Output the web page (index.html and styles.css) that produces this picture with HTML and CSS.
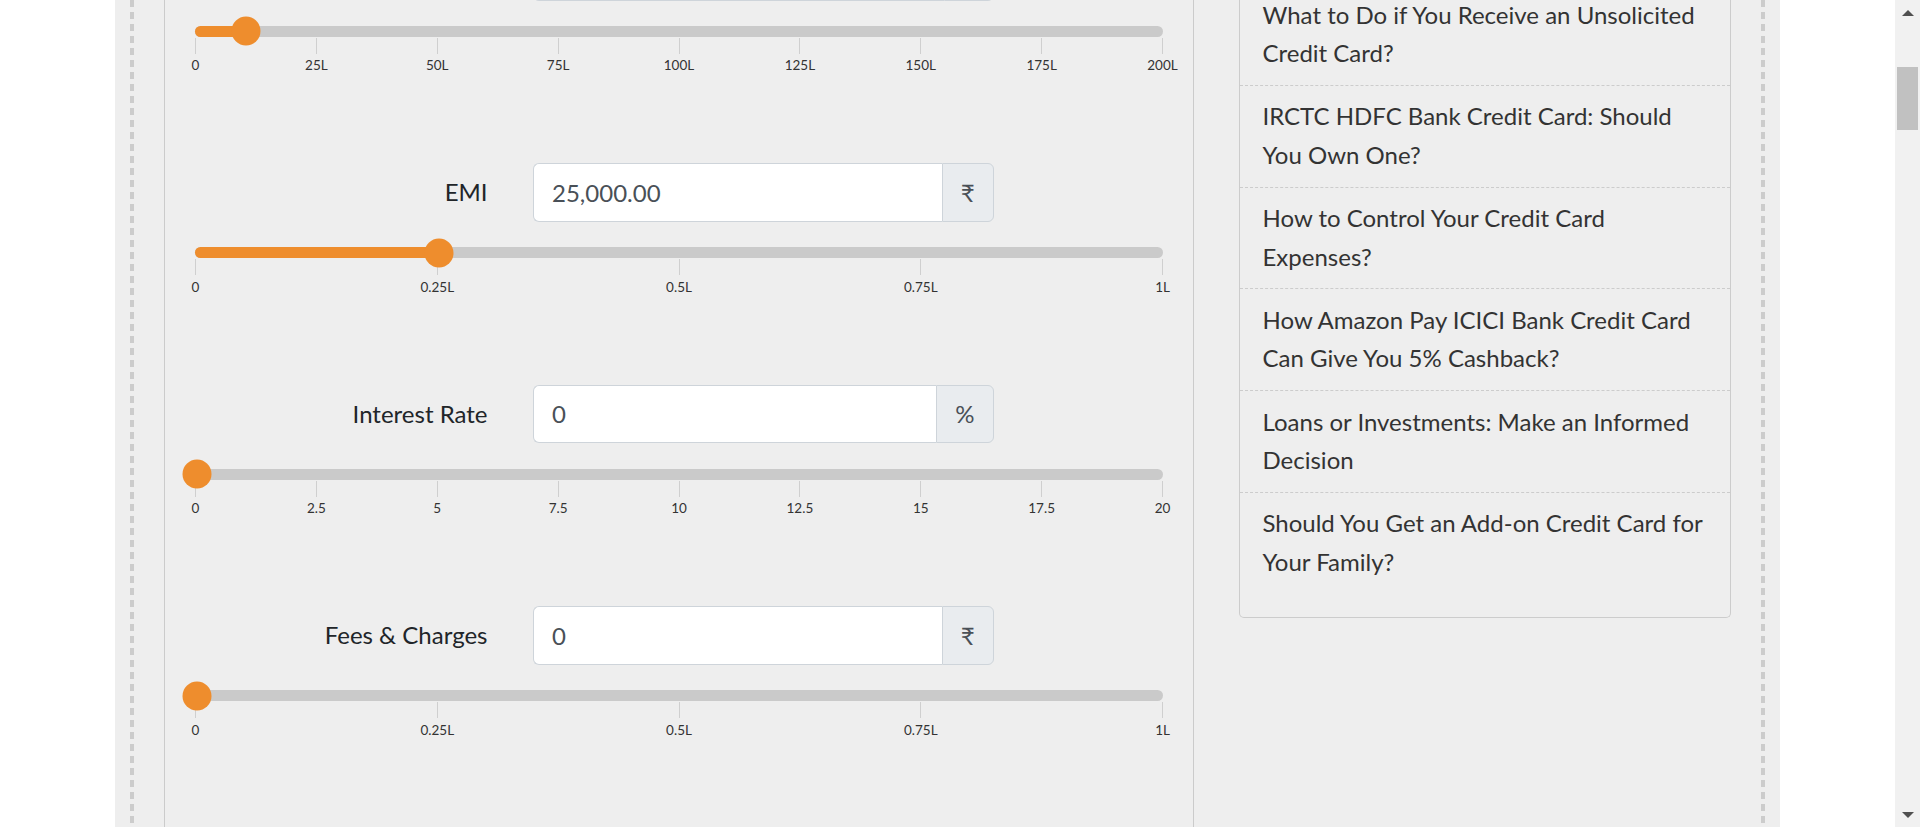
FILE: index.html
```html
<!DOCTYPE html>
<html lang="en">
<head>
<meta charset="utf-8">
<title>Credit Card EMI Calculator</title>
<link rel="stylesheet" href="styles.css">
</head>
<body>
<div class="viewport">
  <div class="page">
    <div class="container">
      <div class="frame">
        <main class="card">
          <div class="card-body">

            <section class="calc-block">
              <div class="form-row">
                <span class="field-label"></span>
                <div class="input-group">
                  <span class="field-input"></span>
                  <span class="addon addon-blank"></span>
                </div>
              </div>
              <div class="slider">
                <div class="track"><div class="fill" style="width:5.1%"></div><span class="thumb" style="left:5.1%"></span></div>
                <div class="grid">
                  <span class="tick"><i></i><b>0</b></span>
                  <span class="tick"><i></i><b>25L</b></span>
                  <span class="tick"><i></i><b>50L</b></span>
                  <span class="tick"><i></i><b>75L</b></span>
                  <span class="tick"><i></i><b>100L</b></span>
                  <span class="tick"><i></i><b>125L</b></span>
                  <span class="tick"><i></i><b>150L</b></span>
                  <span class="tick"><i></i><b>175L</b></span>
                  <span class="tick"><i></i><b>200L</b></span>
                </div>
              </div>
            </section>

            <section class="calc-block">
              <div class="form-row">
                <label class="field-label" for="emi">EMI</label>
                <div class="input-group">
                  <input id="emi" class="field-input" type="text" value="25,000.00" readonly>
                  <span class="addon">₹</span>
                </div>
              </div>
              <div class="slider">
                <div class="track"><div class="fill" style="width:25%"></div><span class="thumb" style="left:25%"></span></div>
                <div class="grid">
                  <span class="tick"><i></i><b>0</b></span>
                  <span class="tick"><i></i><b>0.25L</b></span>
                  <span class="tick"><i></i><b>0.5L</b></span>
                  <span class="tick"><i></i><b>0.75L</b></span>
                  <span class="tick"><i></i><b>1L</b></span>
                </div>
              </div>
            </section>

            <section class="calc-block">
              <div class="form-row">
                <label class="field-label" for="rate">Interest Rate</label>
                <div class="input-group">
                  <input id="rate" class="field-input" type="text" value="0" readonly>
                  <span class="addon">%</span>
                </div>
              </div>
              <div class="slider">
                <div class="track"><div class="fill" style="width:0%"></div><span class="thumb" style="left:0%"></span></div>
                <div class="grid">
                  <span class="tick"><i></i><b>0</b></span>
                  <span class="tick"><i></i><b>2.5</b></span>
                  <span class="tick"><i></i><b>5</b></span>
                  <span class="tick"><i></i><b>7.5</b></span>
                  <span class="tick"><i></i><b>10</b></span>
                  <span class="tick"><i></i><b>12.5</b></span>
                  <span class="tick"><i></i><b>15</b></span>
                  <span class="tick"><i></i><b>17.5</b></span>
                  <span class="tick"><i></i><b>20</b></span>
                </div>
              </div>
            </section>

            <section class="calc-block">
              <div class="form-row">
                <label class="field-label" for="fees">Fees &amp; Charges</label>
                <div class="input-group">
                  <input id="fees" class="field-input" type="text" value="0" readonly>
                  <span class="addon">₹</span>
                </div>
              </div>
              <div class="slider">
                <div class="track"><div class="fill" style="width:0%"></div><span class="thumb" style="left:0%"></span></div>
                <div class="grid">
                  <span class="tick"><i></i><b>0</b></span>
                  <span class="tick"><i></i><b>0.25L</b></span>
                  <span class="tick"><i></i><b>0.5L</b></span>
                  <span class="tick"><i></i><b>0.75L</b></span>
                  <span class="tick"><i></i><b>1L</b></span>
                </div>
              </div>
            </section>

          </div>
        </main>

        <aside class="sidebar">
          <ul class="post-list">
            <li><a href="#">What to Do if You Receive an Unsolicited Credit Card?</a></li>
            <li><a href="#">IRCTC HDFC Bank Credit Card: Should You Own One?</a></li>
            <li><a href="#">How to Control Your Credit Card Expenses?</a></li>
            <li><a href="#">How Amazon Pay ICICI Bank Credit Card Can Give You 5% Cashback?</a></li>
            <li><a href="#">Loans or Investments: Make an Informed Decision</a></li>
            <li><a href="#">Should You Get an Add-on Credit Card for Your Family?</a></li>
          </ul>
        </aside>
      </div>
    </div>
  </div>

  <div class="scrollbar">
    <div class="sb-btn">
      <svg width="12" height="6" viewBox="0 0 12 6"><polygon points="0,6 12,6 6,0" fill="#505050"/></svg>
    </div>
    <div class="sb-track"><div class="sb-thumb"></div></div>
    <div class="sb-btn">
      <svg width="12" height="6" viewBox="0 0 12 6"><polygon points="0,0 12,0 6,6" fill="#505050"/></svg>
    </div>
  </div>
</div>
</body>
</html>
```

FILE: styles.css
```css
* {
  box-sizing: border-box;
}

html, body {
  margin: 0;
  padding: 0;
  height: 100%;
  overflow: hidden;
}

body {
  font-family: "Lato", "Noto Sans", "DejaVu Sans", sans-serif;
  color: #212529;
  background: #ffffff;
}

.viewport {
  display: flex;
  height: 827px;
}

.page {
  flex: 1;
  background: #ffffff;
  overflow: hidden;
}

.container {
  width: 1665px;
  height: 100%;
  margin: 0 auto;
  padding: 0 15px;
  background: #eeeeee;
}

.frame {
  display: flex;
  gap: 45px;
  height: 100%;
  padding: 0 34px;
  background:
    repeating-linear-gradient(to bottom, #cccccc 0 7px, transparent 7px 12px) left top / 4px 100% no-repeat,
    repeating-linear-gradient(to bottom, #cccccc 0 7px, transparent 7px 12px) right top / 4px 100% no-repeat;
}

/* ---------- calculator card ---------- */
.card {
  width: 1030px;
  flex: none;
  border-left: 1px solid #cbcbcb;
  border-right: 1px solid #cbcbcb;
  padding: 0 30px;
}

.card-body {
  margin-top: -57.5px;
}

.calc-block {
  margin-bottom: 90px;
}

.card-body .calc-block:first-child .slider {
  margin-top: 24.5px;
}

.form-row {
  display: grid;
  grid-template-columns: 292.5px 460.5px;
  column-gap: 45.5px;
  align-items: center;
}

.field-label {
  text-align: right;
  font-size: 24px;
  line-height: 36px;
  color: #212529;
}

.input-group {
  display: flex;
  height: 58.5px;
}

.field-input {
  flex: 1;
  min-width: 0;
  height: 100%;
  margin: 0;
  padding: 0 18px;
  border: 1px solid #ced4da;
  border-right: none;
  border-radius: 6px 0 0 6px;
  background: #ffffff;
  font-family: inherit;
  font-size: 24px;
  color: #495057;
  outline: none;
}

.addon {
  display: flex;
  align-items: center;
  padding: 0 18px;
  border: 1px solid #ced4da;
  border-radius: 0 6px 6px 0;
  background: #e9ecef;
  font-size: 24px;
  color: #495057;
}

.addon-blank {
  width: 50px;
}

/* ---------- range slider ---------- */
.slider {
  margin-top: 25.5px;
}

.track {
  position: relative;
  height: 11px;
  border-radius: 5.5px;
  background: #cacaca;
}

.fill {
  height: 100%;
  border-radius: 5.5px 0 0 5.5px;
  background: #ee8d2d;
}

.thumb {
  position: absolute;
  top: 50%;
  width: 29px;
  height: 29px;
  margin-left: 1.5px;
  border-radius: 50%;
  background: #ee8d2d;
  transform: translate(-50%, -50%);
}

.grid {
  display: flex;
  justify-content: space-between;
  margin-top: 1px;
}

.tick {
  width: 1px;
  display: flex;
  flex-direction: column;
  align-items: center;
}

.tick i {
  display: block;
  width: 1px;
  height: 16px;
  background: #cfcfcf;
}

.tick b {
  margin-top: 3.5px;
  font-weight: 400;
  font-size: 13.5px;
  line-height: 16px;
  color: #333333;
  white-space: nowrap;
}

/* ---------- sidebar ---------- */
.sidebar {
  width: 492px;
  flex: none;
  align-self: flex-start;
}

.post-list {
  list-style: none;
  margin: -15.9px 0 0;
  padding: 0 0 24px;
  border: 1px solid #cccccc;
  border-top: none;
  border-radius: 0 0 5px 5px;
}

.post-list li {
  padding: 11.6px 22.5px 12.3px;
  border-bottom: 1px dashed #cccccc;
  font-size: 24px;
  line-height: 38.4px;
}

.post-list li:last-child {
  border-bottom: none;
}

.post-list a {
  color: #333333;
  text-decoration: none;
}

/* ---------- scrollbar ---------- */
.scrollbar {
  width: 25px;
  flex: none;
  display: flex;
  flex-direction: column;
  background: #f1f1f1;
}

.sb-btn {
  height: 25px;
  flex: none;
  display: flex;
  align-items: center;
  justify-content: center;
}

.sb-track {
  flex: 1;
}

.sb-thumb {
  height: 63px;
  margin: 42px 2px 0;
  background: #c1c1c1;
}
```
